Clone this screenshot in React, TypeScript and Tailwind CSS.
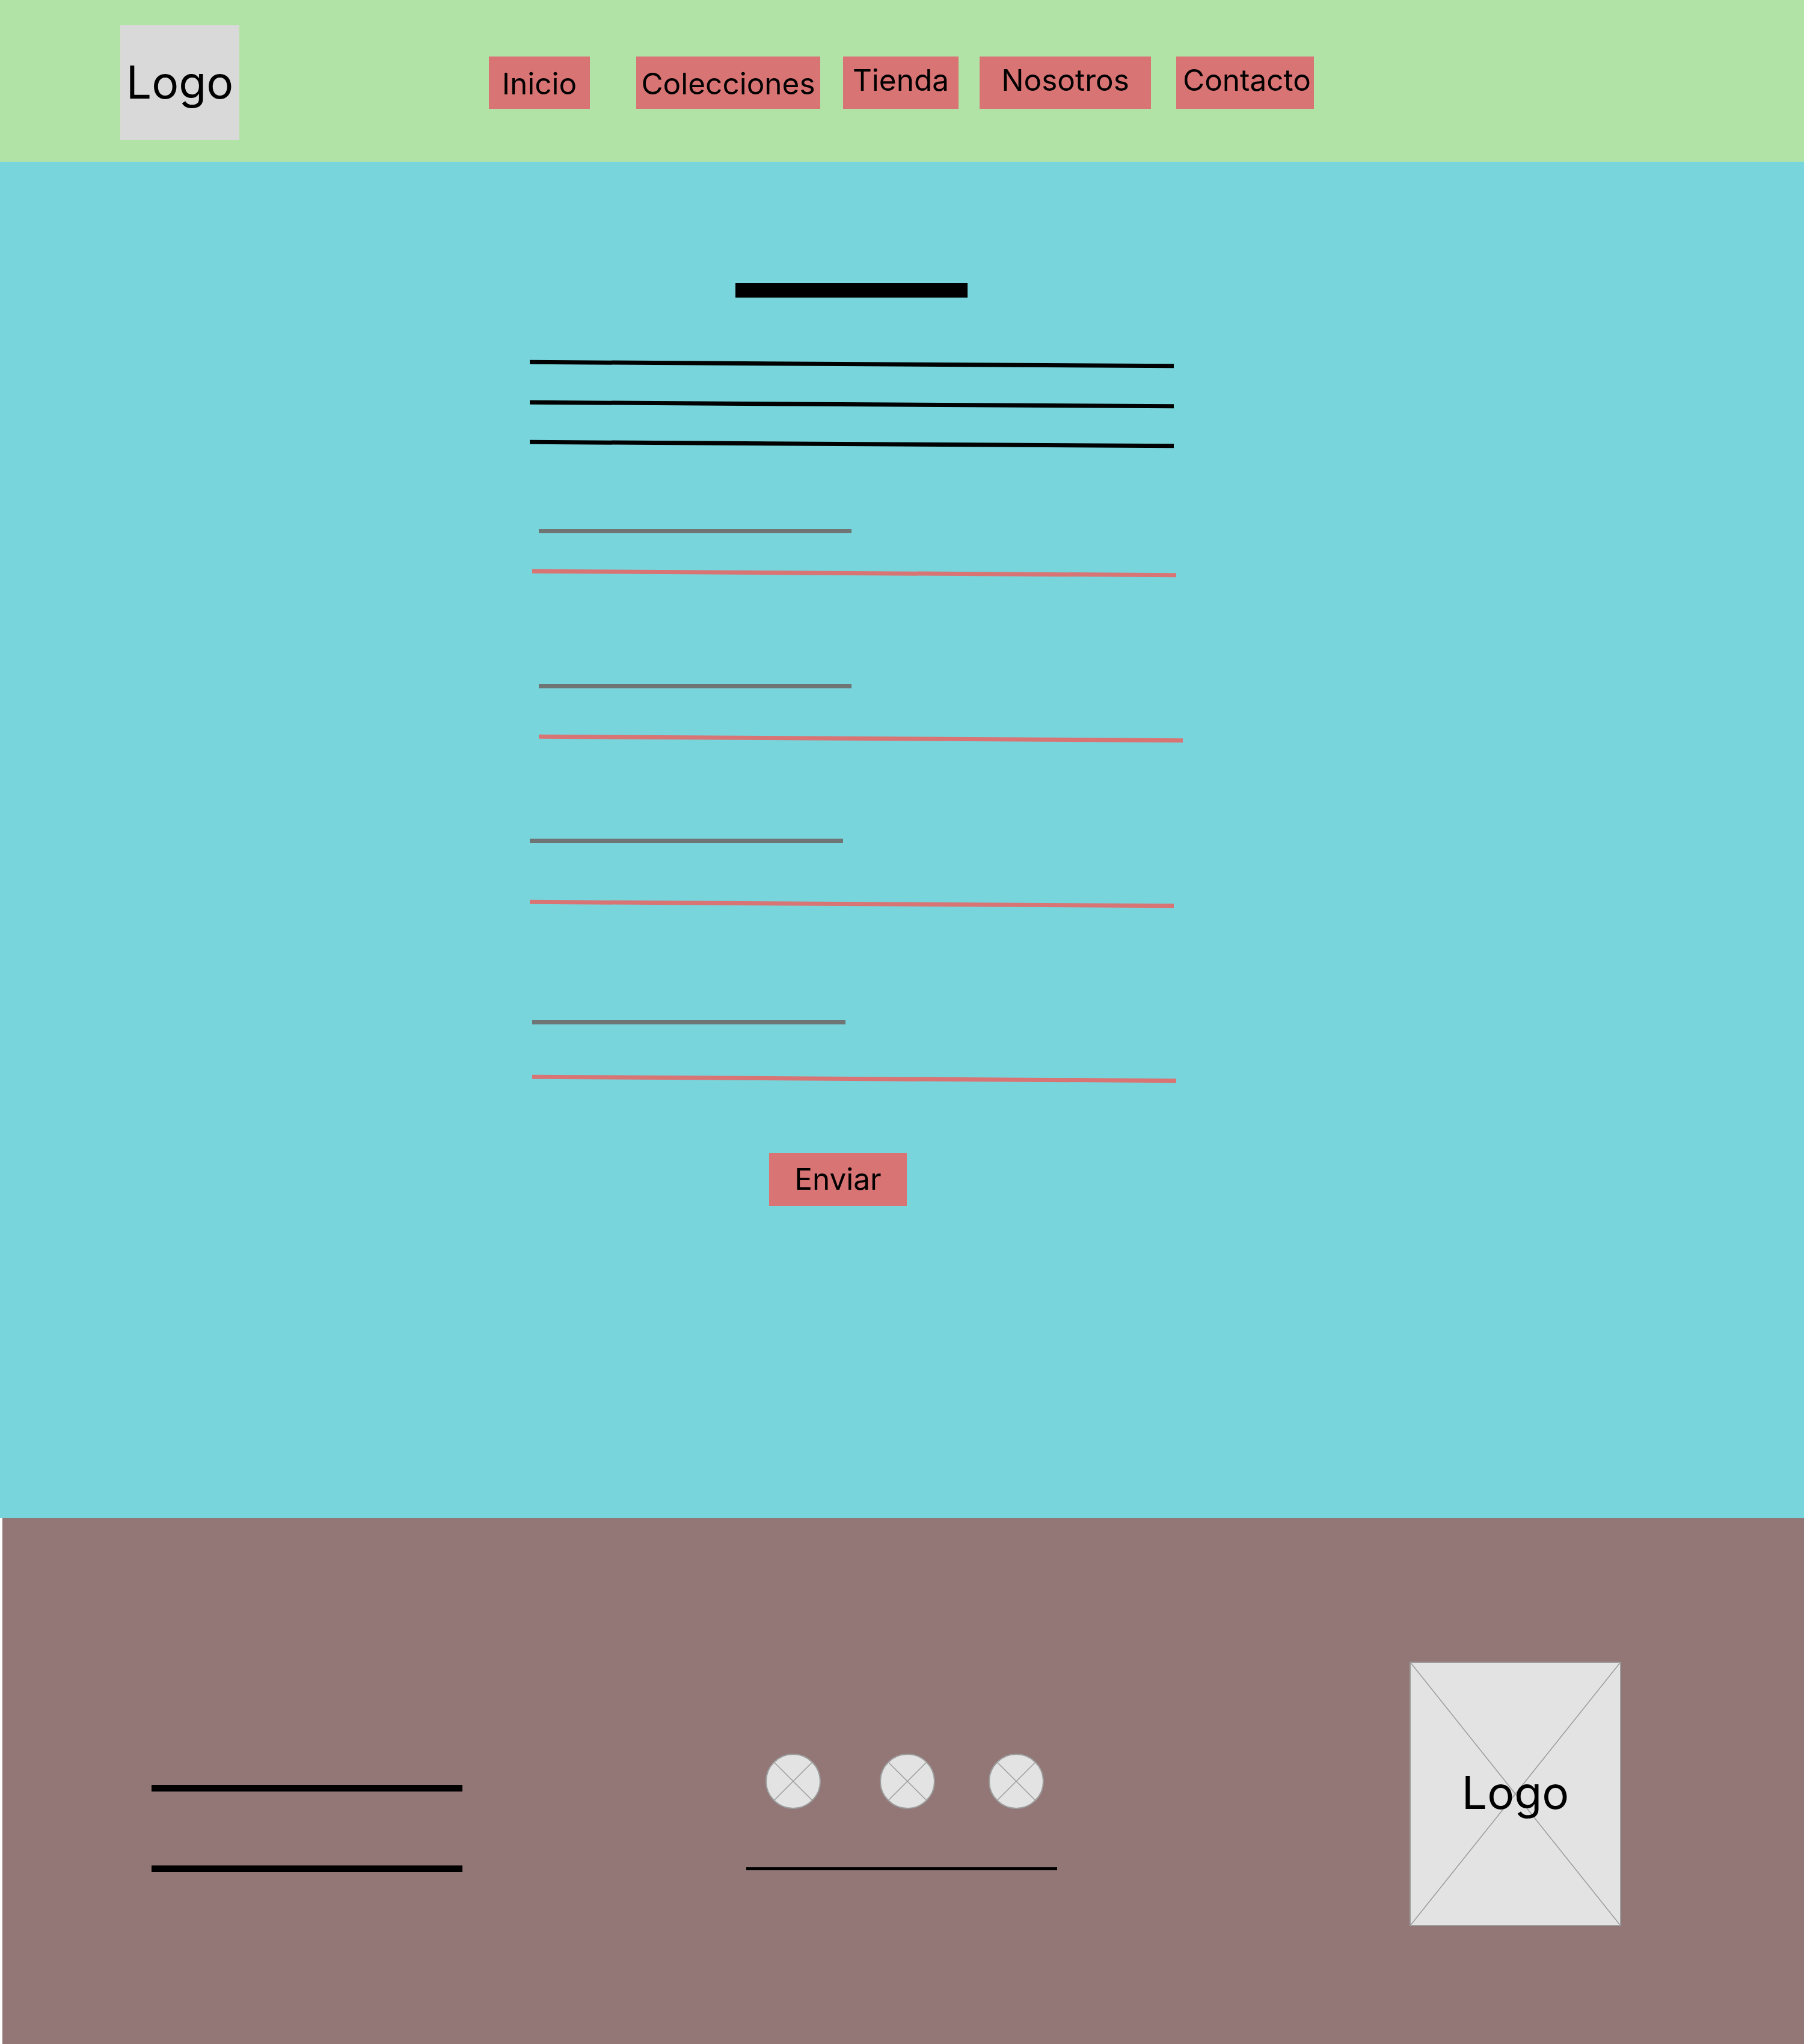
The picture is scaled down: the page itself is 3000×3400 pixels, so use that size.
const font = { fontFamily: "Inter, 'Liberation Sans', sans-serif" };

function NavItem({ label, className }: { label: string; className: string }) {
  return (
    <a className={`flex h-[87px] shrink-0 justify-center whitespace-nowrap bg-[#d87474] text-[49.5px] leading-[58px] text-black ${className}`}>
      {label}
    </a>
  );
}

function Social({ className }: { className: string }) {
  return (
    <svg className={`h-[92px] w-[92px] shrink-0 ${className}`} viewBox="0 0 92 92">
      <circle cx="46" cy="46" r="45" fill="#e3e3e3" stroke="#9c9c9c" strokeWidth="2" />
      <path d="M14 14L78 78M78 14L14 78" stroke="#9c9c9c" strokeWidth="1.5" fill="none" />
    </svg>
  );
}

export default function App() {
  return (
    <div className="flex h-[3400px] w-[3000px] flex-col bg-white" style={font}>
      <header className="flex h-[269px] shrink-0 items-start bg-[#b2e3a6]">
        <div className="ml-[200px] mt-[42px] flex h-[191px] w-[198px] items-center justify-center bg-[#d9d9d9] text-[75px] text-black">
          Logo
        </div>
        <nav className="ml-[415px] mt-[94px] flex">
          <NavItem label="Inicio" className="w-[168px] pt-[16px]" />
          <NavItem label="Colecciones" className="ml-[77px] w-[306px] pt-[16px]" />
          <NavItem label="Tienda" className="ml-[38px] w-[192px] pt-[10px]" />
          <NavItem label="Nosotros" className="ml-[35px] w-[285px] pt-[10px]" />
          <NavItem label="Contacto" className="ml-[42px] w-[229px] !justify-start pl-[11px] pt-[10px]" />
        </nav>
      </header>

      <main className="flex h-[2256px] shrink-0 flex-col items-start bg-[#78d5dc] pt-[202px]">
        <div className="ml-[1223px] h-[24px] w-[386px] bg-black" />

        <div className="ml-[881px] mt-[107px] h-[6.5px] w-[1071px] rotate-[0.34deg] bg-black" />
        <div className="ml-[881px] mt-[60px] h-[6.5px] w-[1071px] rotate-[0.34deg] bg-black" />
        <div className="ml-[881px] mt-[60px] h-[6.5px] w-[1071px] rotate-[0.34deg] bg-black" />

        <div className="ml-[896px] mt-[138.5px] h-[7px] w-[520px] bg-[#6f7475]" />
        <div className="ml-[885px] mt-[63px] h-[6.5px] w-[1071px] rotate-[0.34deg] bg-[#d87474]" />

        <div className="ml-[896px] mt-[181.5px] h-[7px] w-[520px] bg-[#6f7475]" />
        <div className="ml-[896px] mt-[80px] h-[6.5px] w-[1071px] rotate-[0.34deg] bg-[#d87474]" />

        <div className="ml-[881px] mt-[163.5px] h-[6.5px] w-[521px] bg-[#6f7475]" />
        <div className="ml-[881px] mt-[98.5px] h-[6.5px] w-[1071px] rotate-[0.34deg] bg-[#d87474]" />

        <div className="ml-[885px] mt-[190.5px] h-[7px] w-[521px] bg-[#6f7475]" />
        <div className="ml-[885px] mt-[87px] h-[6.5px] w-[1071px] rotate-[0.34deg] bg-[#d87474]" />

        <button className="ml-[1279px] mt-[120.5px] flex h-[88px] w-[229px] justify-center bg-[#d87474] pt-[14px] text-[49.5px] leading-[58px] text-black">
          Enviar
        </button>
      </main>

      <footer className="ml-[4px] flex h-[875px] items-start bg-[#937676]">
        <div className="ml-[248px] mt-[444px] flex w-[517px] shrink-0 flex-col gap-[123px]">
          <div className="h-[11px] bg-black" />
          <div className="h-[11px] bg-black" />
        </div>

        <div className="ml-[472px] mt-[392px] flex w-[517px] shrink-0 flex-col">
          <div className="flex">
            <Social className="ml-[32px]" />
            <Social className="ml-[98px]" />
            <Social className="ml-[89px]" />
          </div>
          <div className="mt-[97px] h-[5px] bg-black" />
        </div>

        <div className="relative ml-[586px] mt-[239px] flex h-[440px] w-[352px] shrink-0 items-center justify-center border-2 border-[#9c9c9c] bg-[#e3e3e3] pb-[4px] text-[75px] text-black">
          <svg className="absolute inset-0 h-full w-full" viewBox="0 0 348 436" preserveAspectRatio="none">
            <path d="M0 0L348 436M348 0L0 436" stroke="#9c9c9c" strokeWidth="1.5" fill="none" />
          </svg>
          <span className="relative">Logo</span>
        </div>
      </footer>
    </div>
  );
}
